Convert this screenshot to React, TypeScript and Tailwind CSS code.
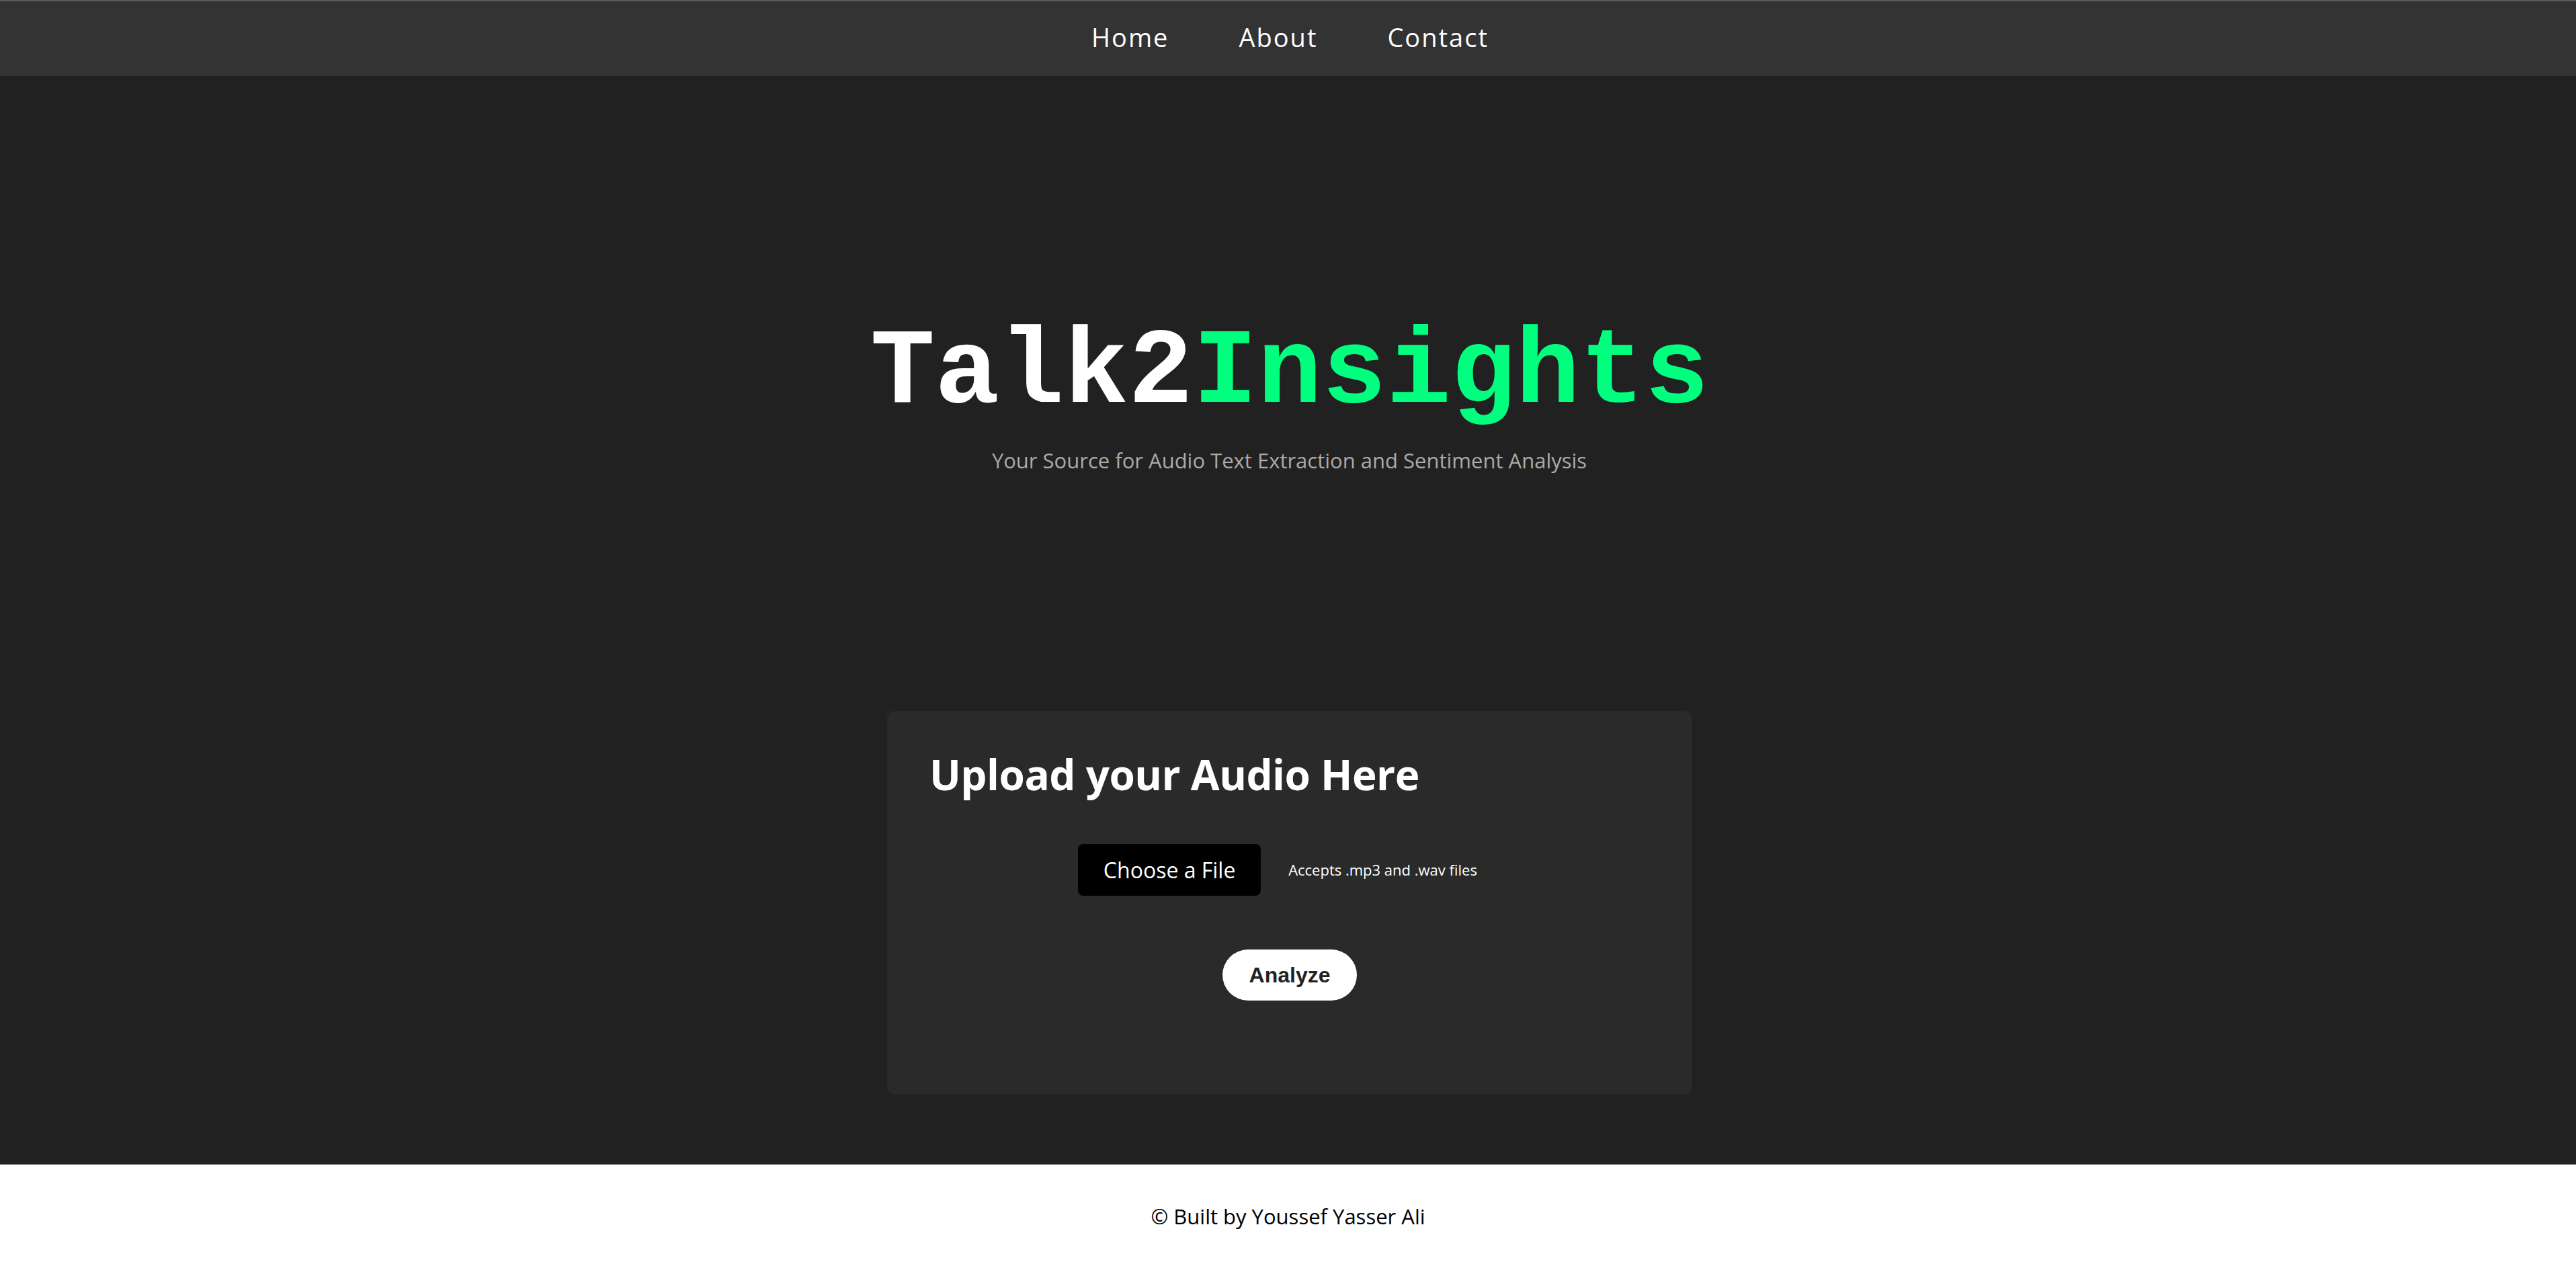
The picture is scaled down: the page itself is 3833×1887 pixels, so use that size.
export default function App() {
  return (
    <div className="flex flex-col bg-[#212121] font-['Open_Sans',sans-serif]">
      <nav className="h-[113px] border-t-2 border-[#5a5a5a] bg-[#333333] flex items-center justify-center gap-[104px] pl-[6px] pb-[4px] text-[38px] tracking-[2px] text-white">
        <a href="#">Home</a>
        <a href="#">About</a>
        <a href="#">Contact</a>
      </nav>
      <main className="h-[1620px] flex flex-col items-center">
        <h1 className="mt-[363px] ml-[5px] h-[160px] text-[160px] leading-none font-bold font-['Liberation_Mono',monospace] text-white">
          Talk2<span className="text-[#00ff7f]">Insights</span>
        </h1>
        <p className="mt-[34px] ml-[4px] h-[31px] text-[31px] leading-none text-[#aaaaaa]">
          Your Source for Audio Text Extraction and Sentiment Analysis
        </p>
        <section className="mt-[357px] ml-[5px] w-[1198px] h-[571px] rounded-xl bg-[#2a2a2a] px-[63px] pt-[63px] flex flex-col">
          <h2 className="h-[64px] text-[62px] tracking-[-0.5px] leading-none font-bold text-white">Upload your Audio Here</h2>
          <div className="mt-[71px] flex items-center justify-center pr-[36px]">
            <label className="h-[77px] w-[272px] rounded-lg bg-black text-white text-[32px] flex items-center justify-center">
              Choose a File
            </label>
            <span className="ml-[41px] text-[22px] text-white">Accepts .mp3 and .wav files</span>
          </div>
          <div className="mt-[80px] flex justify-center">
            <button className="h-[76px] w-[200px] rounded-full bg-white text-[#222222] text-[32px] font-bold font-['Liberation_Sans',Arial,sans-serif]">
              Analyze
            </button>
          </div>
        </section>
      </main>
      <footer className="h-[154px] bg-white flex items-center justify-center text-[31px] text-black">
        © Built by Youssef Yasser Ali
      </footer>
    </div>
  );
}
